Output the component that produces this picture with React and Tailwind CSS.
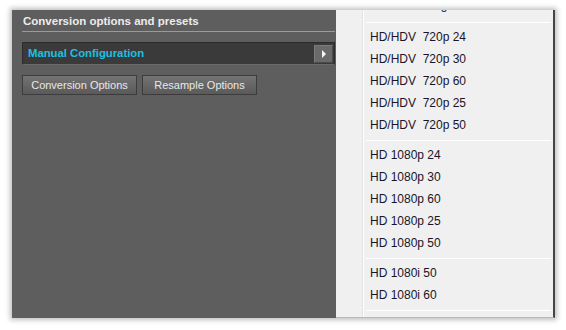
import React from "react";

const groups = [
  ["HD/HDV\u00a0 720p 24", "HD/HDV\u00a0 720p 30", "HD/HDV\u00a0 720p 60", "HD/HDV\u00a0 720p 25", "HD/HDV\u00a0 720p 50"],
  ["HD 1080p 24", "HD 1080p 30", "HD 1080p 60", "HD 1080p 25", "HD 1080p 50"],
  ["HD 1080i 50", "HD 1080i 60"],
];

function MenuItem({ label }) {
  return (
    <div className="h-[22px] flex items-center pl-[34px] text-[12px] text-[#1a1428] whitespace-nowrap">
      {label}
    </div>
  );
}

function Separator() {
  return <div className="h-[8px] flex items-center pl-[30px] pr-[2px]"><div className="h-px w-full bg-[#d7d7d7] border-b border-white" /></div>;
}

export default function App() {
  return (
    <div className="w-[566px] h-[330px] bg-white pt-[10px] pl-[12px] font-['Liberation_Sans',sans-serif]">
      <div className="w-[543px] h-[308px] flex shadow-[0_0_5px_2px_rgba(0,0,0,0.25)]">
        {/* left panel */}
        <div className="w-[324px] h-full bg-[#5e5e5e] pl-[10px] pr-[1px] pt-[3px]">
          <div className="text-[11.5px] font-bold text-[#ececec] h-[17px] pl-[1px] leading-[17px]">Conversion options and presets</div>
          <div className="h-px bg-[#9a9a9a] mt-[1px]" />
          <div className="mt-[10px] h-[23px] bg-[#3a3a3a] border border-[#2c2c2c] border-b-[#6a6a6a] flex items-center justify-between pl-[5px] pr-[1px]">
            <span className="text-[11.3px] font-bold text-[#1cc0e2]">Manual Configuration</span>
            <div className="w-[19px] h-[18px] bg-[#6a6a6a] border border-[#7c7c7c] border-b-[#4a4a4a] border-r-[#4a4a4a] flex items-center justify-center">
              <svg width="6" height="8" viewBox="0 0 6 8"><path d="M1 0 L5 4 L1 8 Z" fill="#f5f5f5" /></svg>
            </div>
          </div>
          <div className="mt-[10px] flex gap-[5px]">
            <div className="w-[115px] h-[20px] bg-gradient-to-b from-[#737373] to-[#5a5a5a] border border-[#3c3c3c] text-[11px] text-[#e8e8e8] flex items-center justify-center">Conversion Options</div>
            <div className="w-[115px] h-[20px] bg-gradient-to-b from-[#737373] to-[#5a5a5a] border border-[#3c3c3c] text-[11px] text-[#e8e8e8] flex items-center justify-center">Resample Options</div>
          </div>
        </div>
        {/* menu */}
        <div className="flex-1 h-full bg-[#f0f0f0] border-r-2 border-[#454545] border-b border-b-[#b8b8b8] relative overflow-hidden">
          <div className="absolute top-0 bottom-0 left-[26px] w-px bg-[#e2e2e2]" />
          <div className="absolute top-0 bottom-0 left-[27px] w-px bg-white" />
          <div className="relative -mt-[1px]">
            <div className="h-[9px] overflow-hidden">
              <div className="-mt-[15px]"><MenuItem label="Manual Configuration" /></div>
            </div>
            {groups.map((g, i) => (
              <div key={i}>
                <Separator />
                {g.map((l) => <MenuItem key={l} label={l} />)}
              </div>
            ))}
            <Separator />
          </div>
        </div>
      </div>
    </div>
  );
}
